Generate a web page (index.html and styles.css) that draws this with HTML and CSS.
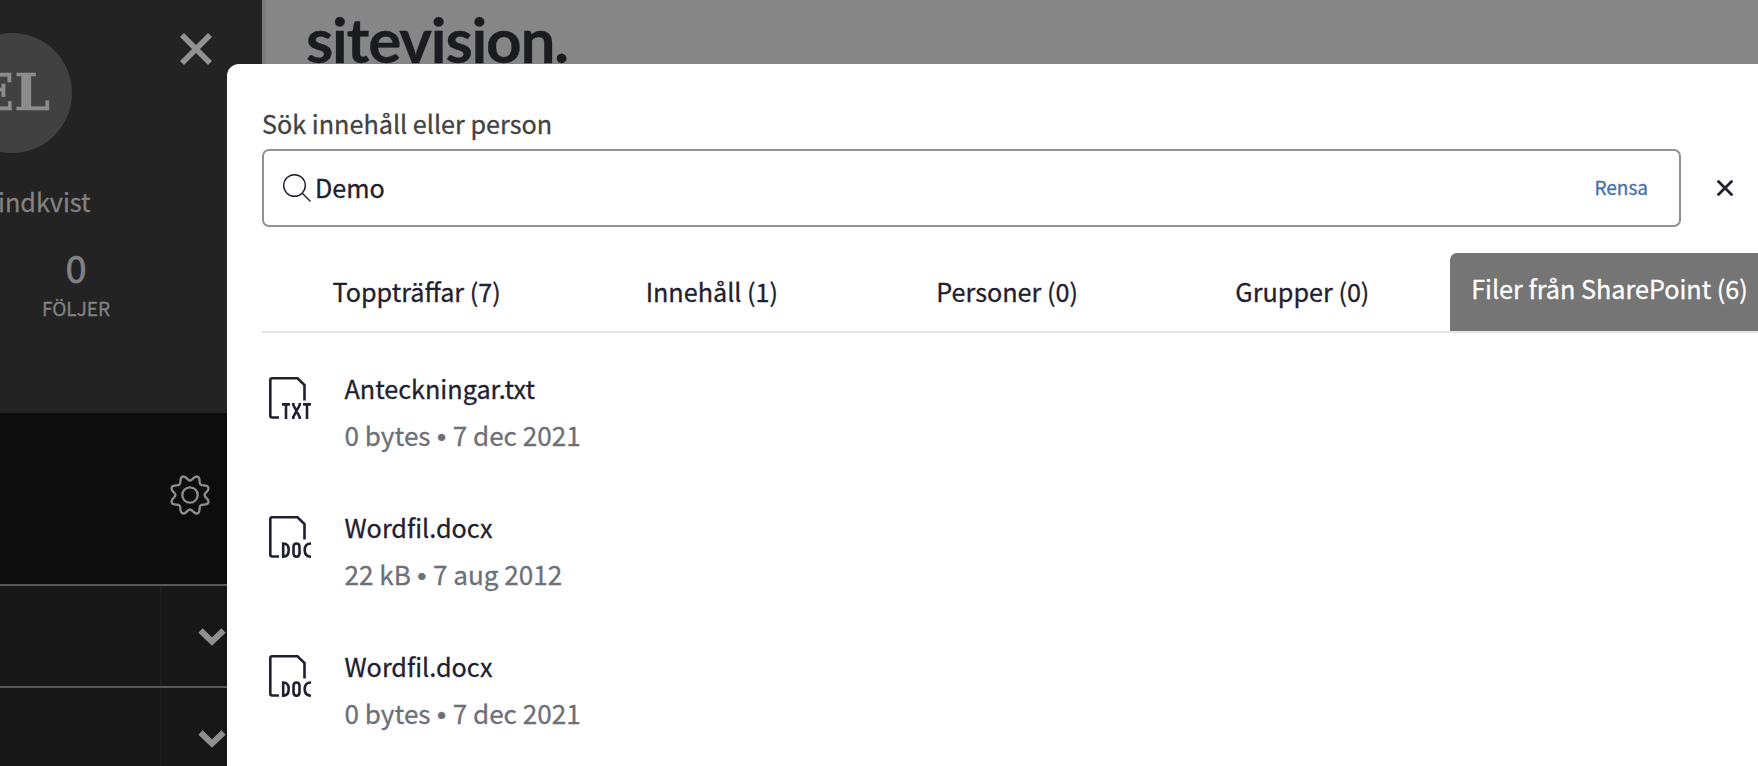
FILE: index.html
```
<!DOCTYPE html>
<html lang="sv">
<head>
<meta charset="utf-8">
<title>Sitevision</title>
<link rel="stylesheet" href="styles.css">
</head>
<body>
<svg class="sprite" width="0" height="0" aria-hidden="true">
  <symbol id="file" viewBox="0 0 42 42"><path d="M10 40.5H3.2Q1.3 40.5 1.3 38.5V3.3Q1.3 1.3 3.3 1.3H28.5L35.5 8V23.5"/></symbol>
  <symbol id="chevron" viewBox="0 0 28 18"><path d="M2.5 2.5L14 13.5L25.5 2.5"/></symbol>
</svg>
<div class="page">
  <aside class="sidebar">
    <section class="profile">
      <div class="avatar"><span class="initials">EL</span></div>
      <svg class="close-menu" viewBox="0 0 32 32"><path d="M2 2L30 30M30 2L2 30"/></svg>
      <p class="user-name">indkvist</p>
      <div class="stat"><strong class="stat-value">0</strong><span class="stat-label">FÖLJER</span></div>
    </section>
    <section class="settings">
      <svg class="gear" viewBox="-20 -20 40 40"><circle r="7.7"/><path d="M0 -14.5C2.5 -14.5 3.5 -18.5 6.5 -18.5C9.5 -18.5 9.6 -16 9.6 -13.5C9.6 -10.5 10.5 -9.6 13.5 -9.6C16 -9.6 18.5 -9.5 18.5 -6.5C18.5 -3.5 14.5 -2.5 14.5 0C14.5 2.5 18.5 3.5 18.5 6.5C18.5 9.5 16 9.6 13.5 9.6C10.5 9.6 9.6 10.5 9.6 13.5C9.6 16 9.5 18.5 6.5 18.5C3.5 18.5 2.5 14.5 0 14.5C-2.5 14.5 -3.5 18.5 -6.5 18.5C-9.5 18.5 -9.6 16 -9.6 13.5C-9.6 10.5 -10.5 9.6 -13.5 9.6C-16 9.6 -18.5 9.5 -18.5 6.5C-18.5 3.5 -14.5 2.5 -14.5 0C-14.5 -2.5 -18.5 -3.5 -18.5 -6.5C-18.5 -9.5 -16 -9.6 -13.5 -9.6C-10.5 -9.6 -9.6 -10.5 -9.6 -13.5C-9.6 -16 -9.5 -18.5 -6.5 -18.5C-3.5 -18.5 -2.5 -14.5 0 -14.5Z"/></svg>
    </section>
    <nav class="menu">
      <div class="menu-row"><div class="menu-toggle"><svg class="chevron"><use href="#chevron"/></svg></div></div>
      <div class="menu-row"><div class="menu-toggle"><svg class="chevron"><use href="#chevron"/></svg></div></div>
    </nav>
  </aside>
  <header class="site-header"><span class="logo">sitevision.</span></header>
  <main class="dialog">
    <label class="search-label" for="q">Sök innehåll eller person</label>
    <div class="search-row">
      <div class="search-box">
        <svg class="search-icon" viewBox="0 0 28 28"><circle cx="11.5" cy="11.5" r="10.8"/><path d="M19.3 19.3L27.5 27.5"/></svg>
        <span class="query" id="q">Demo</span>
        <a class="clear">Rensa</a>
      </div>
      <svg class="close-search" viewBox="0 0 16 16"><path d="M1.5 1.5L14.5 14.5M14.5 1.5L1.5 14.5"/></svg>
    </div>
    <div class="tabs">
      <div class="tab"><span>Toppträffar (7)</span></div>
      <div class="tab"><span>Innehåll (1)</span></div>
      <div class="tab"><span>Personer (0)</span></div>
      <div class="tab"><span>Grupper (0)</span></div>
      <div class="tab active"><span>Filer från SharePoint (6)</span></div>
    </div>
    <ul class="files">
      <li class="file">
        <svg class="file-icon" viewBox="0 0 42 42"><use href="#file"/><path d="M13 27.4H21M17 27.4V42M24.3 26V28L30.7 40V42M30.7 26V28L24.3 40V42M34 27.4H42M38 27.4V42"/></svg>
        <div class="file-text"><div class="file-name">Anteckningar.txt</div><div class="file-meta">0 bytes <span class="dot">•</span> 7 dec 2021</div></div>
      </li>
      <li class="file">
        <svg class="file-icon" viewBox="0 0 42 42"><use href="#file"/><path d="M14.2 27.5V40.7C18.5 40.7 19.7 38 19.7 34S18.5 27.5 14.2 27.5ZM27.5 27.5Q30.5 27.5 30.5 31V37Q30.5 40.7 27.5 40.7T24.5 37V31Q24.5 27.5 27.5 27.5ZM42 27.5C37 27.5 35.7 30 35.7 34S37 40.7 42 40.7"/></svg>
        <div class="file-text"><div class="file-name">Wordfil.docx</div><div class="file-meta">22 kB <span class="dot">•</span> 7 aug 2012</div></div>
      </li>
      <li class="file">
        <svg class="file-icon" viewBox="0 0 42 42"><use href="#file"/><path d="M14.2 27.5V40.7C18.5 40.7 19.7 38 19.7 34S18.5 27.5 14.2 27.5ZM27.5 27.5Q30.5 27.5 30.5 31V37Q30.5 40.7 27.5 40.7T24.5 37V31Q24.5 27.5 27.5 27.5ZM42 27.5C37 27.5 35.7 30 35.7 34S37 40.7 42 40.7"/></svg>
        <div class="file-text"><div class="file-name">Wordfil.docx</div><div class="file-meta">0 bytes <span class="dot">•</span> 7 dec 2021</div></div>
      </li>
    </ul>
  </main>
</div>
</body>
</html>
```
FILE: styles.css
```
* { box-sizing: border-box; }
body {
  margin: 0;
  overflow: hidden;
  font-family: "Noto Sans CJK SC", "Noto Sans", sans-serif;
  font-size: 25.2px;
  line-height: 36px;
  color: #1f2030;
  -webkit-text-stroke: 0.3px currentColor;
}
p, ul { margin: 0; padding: 0; list-style: none; }
svg { display: block; fill: none; flex: none; }
.sprite { position: absolute; }

.page {
  display: grid;
  grid-template-columns: 262px 1fr;
  height: 766px;
  overflow: hidden;
  background: #868686;
}

.sidebar { background: #171717; height: 766px; overflow: hidden; }
.profile {
  display: grid;
  grid-template-columns: 72px 1fr;
  grid-template-rows: 153px 86px 1fr;
  height: 413px;
  background: #232323;
  color: #828282;
}
.avatar {
  display: flex;
  align-items: center;
  justify-content: flex-end;
  justify-self: end;
  width: 120px;
  height: 120px;
  margin-top: 33px;
  padding: 0 22px 2px 0;
  border-radius: 50%;
  background: #414141;
}
.initials {
  font: bold 51px/60px "DejaVu Serif", serif;
  color: #8c8c8c;
}
.close-menu { width: 32px; height: 32px; margin: 33px 0 0 108px; stroke: #929292; stroke-width: 5.6; }
.user-name { grid-column: 1 / 3; margin-left: -2px; padding-top: 30px; }
.stat { grid-column: 1 / 3; display: flex; flex-direction: column; align-items: center; width: 152px; }
.stat-value { font-size: 38px; font-weight: 400; line-height: 56px; -webkit-text-stroke-width: 0.7px; }
.stat-label { font-size: 19px; line-height: 26px; }

.settings { height: 171px; padding: 62px 0 0 170px; background: #0d0d0d; }
.gear { width: 40px; height: 40px; stroke: #8e8e8e; stroke-width: 2.3; }

.menu-row { display: flex; height: 102px; padding-left: 160px; border-top: 2px solid #595959; }
.menu-toggle { width: 102px; padding: 42px 0 0 36px; border-left: 2px solid #1d1d1d; }
.chevron { width: 28px; height: 18px; stroke: #909090; stroke-width: 6; }

.site-header { height: 66px; padding-left: 40px; border-left: 4px solid #7b7b7b; }
.logo { font: bold 62px/78px Lato, sans-serif; letter-spacing: -1.2px; color: #1b1c20; }

/* The search dialog covers the page from its left gutter to the right edge. */
.dialog {
  position: absolute;
  left: 227px;
  top: 64px;
  width: 1531px;
  height: 702px;
  padding: 41px 0 0 35px;
  overflow: hidden;
  border-top-left-radius: 12px;
  background: #fff;
}
.search-label { display: block; height: 44px; color: #424242; }
.search-row { display: flex; align-items: center; }
.search-box {
  display: flex;
  align-items: center;
  width: 1419px;
  height: 78px;
  padding: 0 31px 0 19px;
  border: 2px solid #919191;
  border-radius: 7px;
}
.search-icon { width: 28px; height: 28px; stroke: #1f2030; stroke-width: 1.4; }
.query { margin-left: 4px; padding-bottom: 2px; }
.clear { margin-left: auto; padding-bottom: 2px; font-size: 19px; color: #4471ae; }
.close-search { width: 16px; height: 16px; margin-left: 36px; stroke: #1f1f30; stroke-width: 2.8; stroke-linecap: round; }

.tabs { display: flex; height: 80px; margin-top: 26px; padding-left: 7px; border-bottom: 2px solid #e5e5e5; }
.tab { flex: none; width: 295.25px; padding-top: 20px; text-align: center; white-space: nowrap; }
.tab.active { width: 319px; padding-top: 17px; border-radius: 7px 0 0 0; background: #757575; color: #fff; }

.file { display: flex; height: 139px; padding: 38px 0 0 7px; }
.file-icon { width: 42px; height: 42px; margin-top: 6px; stroke: #1f2030; stroke-width: 2.6; }
.file-text { margin: -6px 0 0 33.5px; line-height: 47px; }
.file-meta { font-size: 26.1px; color: #6e7078; }
.dot { display: inline-block; width: 11px; margin: 0 -0.3px; font-family: "Liberation Sans", sans-serif; line-height: 20px; text-align: center; }
```
